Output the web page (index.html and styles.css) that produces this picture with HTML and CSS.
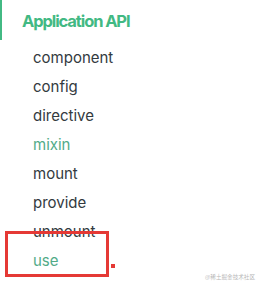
FILE: index.html
```html
<!DOCTYPE html>
<html lang="en">
<head>
    <meta charset="UTF-8">
    <meta name="viewport" content="width=device-width, initial-scale=1.0">
    <title>Application API</title>
    <link rel="stylesheet" href="styles.css">
</head>
<body>
    <div class="sidebar">
        <h2 class="group-title">Application API</h2>
        <ul class="links">
            <li>component</li>
            <li>config</li>
            <li>directive</li>
            <li class="active">mixin</li>
            <li>mount</li>
            <li>provide</li>
            <li>unmount</li>
            <li class="active">use</li>
        </ul>
        <div class="mark"></div>
        <div class="dot"></div>
    </div>
    <div class="watermark">@稀土掘金技术社区</div>
</body>
</html>
```

FILE: styles.css
```css
body {
    margin: 0;
    padding: 0;
    font-family: Inter, "Noto Sans", sans-serif;
    background: #fff;
    width: 263px;
    height: 290px;
    overflow: hidden;
    position: relative;
}
.sidebar {
    position: relative;
}
.group-title {
    margin: 0;
    height: 40px;
    padding-left: 20px;
    border-left: 2px solid #42b983;
    font-size: 16.5px;
    font-weight: 700;
    letter-spacing: -1.1px;
    color: #42b983;
    line-height: 42px;
}
.links {
    list-style: none;
    margin: 0;
    padding: 3px 0 0 33px;
}
.links li {
    height: 29px;
    line-height: 29px;
    font-size: 15px;
    color: #333a40;
}
.links li.active {
    color: #52ab88;
}
.mark {
    position: absolute;
    left: 5px;
    top: 231px;
    width: 98px;
    height: 40px;
    border: 3px solid #e53935;
}
.dot {
    position: absolute;
    left: 111px;
    top: 264px;
    width: 4px;
    height: 4px;
    background: #e53935;
}
.watermark {
    position: absolute;
    left: 205px;
    top: 273px;
    font-size: 5.6px;
    white-space: nowrap;
    color: #b8b8b8;
    font-family: "Noto Sans CJK SC", sans-serif;
}
```
